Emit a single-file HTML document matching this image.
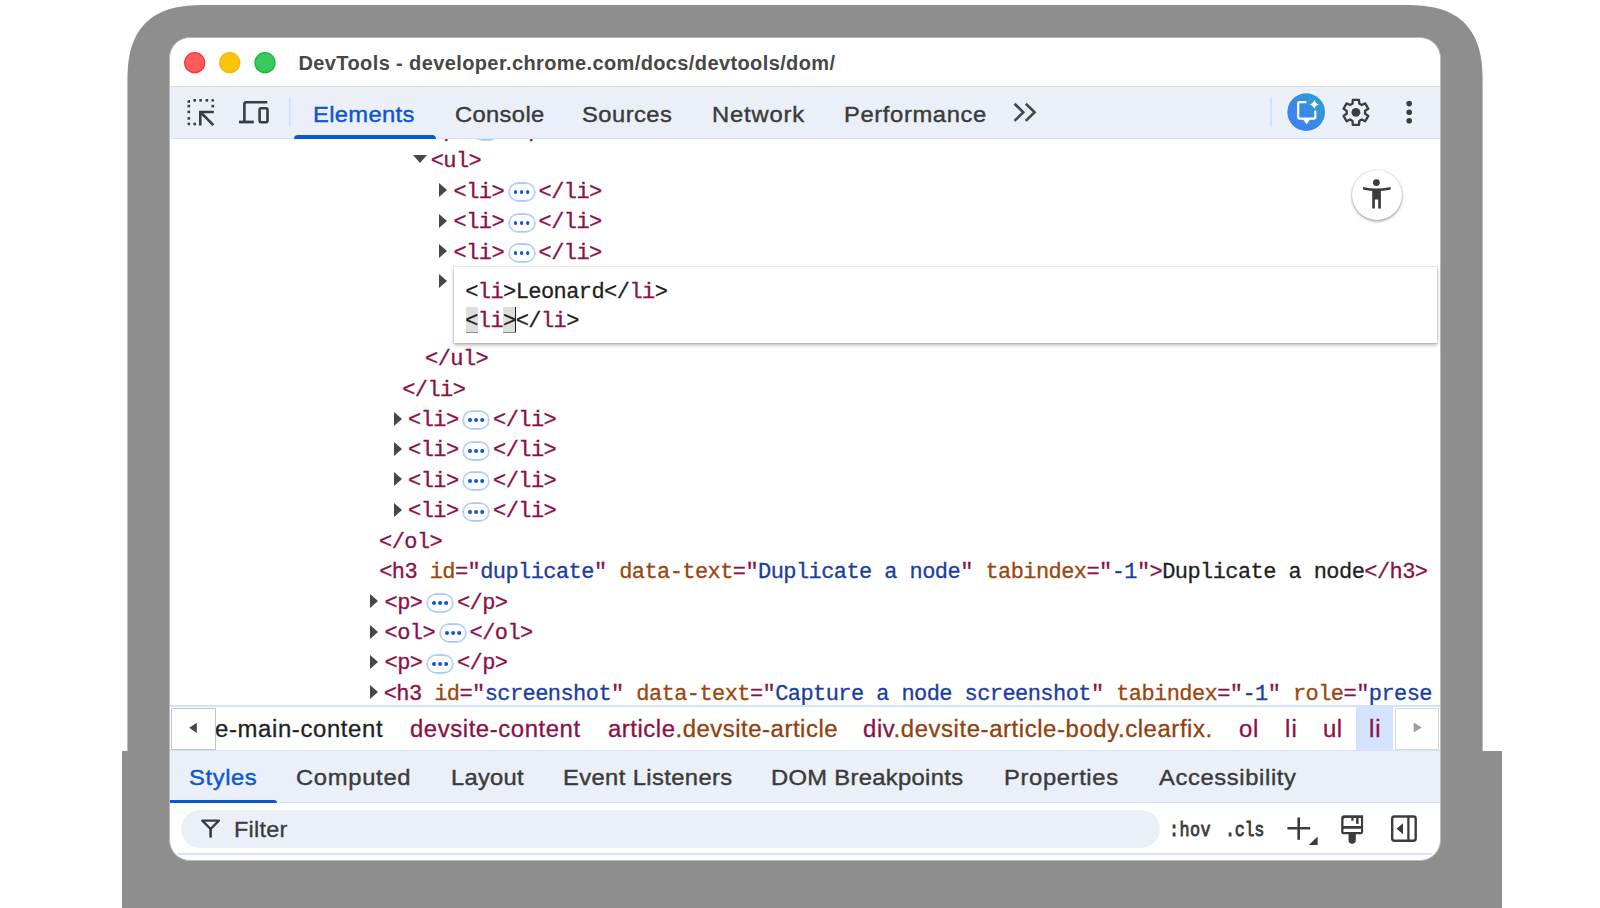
<!DOCTYPE html>
<html><head><meta charset="utf-8">
<style>
*{box-sizing:border-box;margin:0;padding:0}
html,body{width:1600px;height:908px;overflow:hidden;background:#fff;position:relative;font-family:"Liberation Sans",sans-serif}
.abs{position:absolute}
svg{position:absolute;overflow:visible}
#frameTop{left:127px;top:6px;width:1356px;height:760px;background:#8e8e8e;border-radius:68px 68px 0 0}
#frameBot{left:122px;top:751px;width:1380px;height:157px;background:#8e8e8e}
#win{left:169.3px;top:37.3px;width:1271.3px;height:823.7px;background:#fff;border-radius:21px;border:1px solid #b9b9b9;overflow:hidden}
.tl{position:absolute;width:21.2px;height:21.2px;border-radius:50%;top:52.1px;border:1px solid}
.t{position:absolute;white-space:pre;line-height:1}
#title{left:299px;top:53.6px;font-size:20px;font-weight:bold;color:#474747;letter-spacing:0.42px}
#toolbar{left:170px;top:86px;width:1270px;height:52.6px;background:#ebf0f8;border-top:1px solid #dcdcdc;border-bottom:1px solid #d3e3fd}
.tab{font-size:22px;color:#3b3b3b;letter-spacing:1.2px;top:103.2px;-webkit-text-stroke:0.4px currentColor}
.m{position:absolute;white-space:pre;line-height:1;font-family:"Liberation Mono",monospace;font-size:22px;letter-spacing:-0.575px;color:#8b1048;-webkit-text-stroke:0.3px currentColor}
.tag{color:#8b1048}.an{color:#9a4610}.av{color:#1b3d9e}.tx{color:#1f1f1f}
.pill{display:inline-block;position:relative;width:26px;height:18px;border:1px solid #a8c7fa;box-shadow:0 0 0 0.7px #a8c7fa;border-radius:9px;margin:0 4px 0 4.5px;vertical-align:top;top:1.5px}
.pill:before{content:"";position:absolute;left:4.05px;top:6px;width:3.9px;height:3.9px;border-radius:50%;background:#0b57d0;box-shadow:6.1px 0 0 #0b57d0,12.2px 0 0 #0b57d0}
.tr{position:absolute;width:0;height:0;border-top:7px solid transparent;border-bottom:7px solid transparent;border-left:8px solid #474747}
.td{position:absolute;width:0;height:0;border-left:7px solid transparent;border-right:7px solid transparent;border-top:8px solid #474747}
#editor{left:454px;top:267px;width:983px;height:75.5px;background:#fff;box-shadow:0 0 0 1px rgba(0,0,0,0.07),0 2px 4px rgba(0,0,0,0.3)}
#crumbs{left:170px;top:705px;width:1270px;height:45px;background:#fff;border-top:2px solid #d3e3fd}
.cr{font-size:23px;letter-spacing:0.9px;top:717.4px;color:#8b1048}
.cr .cl{color:#9a4610}
#tabs2{left:170px;top:750px;width:1270px;height:53px;background:#ebf0f8;border-top:1px solid #d3e3fd;border-bottom:1px solid #d3e3fd}
.tab2{font-size:22px;color:#3b3b3b;letter-spacing:1.3px;top:766.4px}
#filterbar{left:178px;top:853px;width:1254px;height:2px;background:#d3e3fd}
#filter{left:180.5px;top:809.5px;width:979px;height:38px;border-radius:19px;background:#ebf0f8}
.bl{display:inline-block;width:0;height:0;vertical-align:baseline}
</style></head><body>
<svg width="1600" height="908" style="left:0;top:0"><path fill="#8e8e8e" d="M127.40,760.00 L127.40,85.00 L127.45,77.73 L127.58,72.86 L127.81,68.62 L128.13,64.76 L128.54,61.16 L129.04,57.77 L129.64,54.55 L130.32,51.48 L131.09,48.54 L131.96,45.73 L132.91,43.03 L133.95,40.43 L135.09,37.93 L136.31,35.54 L137.62,33.24 L139.02,31.03 L140.51,28.92 L142.09,26.89 L143.76,24.96 L145.51,23.11 L147.36,21.36 L149.29,19.69 L151.32,18.11 L153.43,16.62 L155.64,15.22 L157.94,13.91 L160.33,12.69 L162.83,11.55 L165.43,10.51 L168.13,9.56 L170.94,8.69 L173.88,7.92 L176.95,7.24 L180.17,6.64 L183.56,6.14 L187.16,5.73 L191.02,5.41 L195.26,5.18 L200.13,5.05 L207.40,5.00 L1402.60,5.00 L1409.87,5.05 L1414.74,5.18 L1418.98,5.41 L1422.84,5.73 L1426.44,6.14 L1429.83,6.64 L1433.05,7.24 L1436.12,7.92 L1439.06,8.69 L1441.87,9.56 L1444.57,10.51 L1447.17,11.55 L1449.67,12.69 L1452.06,13.91 L1454.36,15.22 L1456.57,16.62 L1458.68,18.11 L1460.71,19.69 L1462.64,21.36 L1464.49,23.11 L1466.24,24.96 L1467.91,26.89 L1469.49,28.92 L1470.98,31.03 L1472.38,33.24 L1473.69,35.54 L1474.91,37.93 L1476.05,40.43 L1477.09,43.03 L1478.04,45.73 L1478.91,48.54 L1479.68,51.48 L1480.36,54.55 L1480.96,57.77 L1481.46,61.16 L1481.87,64.76 L1482.19,68.62 L1482.42,72.86 L1482.55,77.73 L1482.60,85.00 L1482.60,760.00Z"/></svg>
<div id="frameBot" class="abs"></div>
<div id="win" class="abs">
</div>

<svg width="1600" height="908" style="left:0;top:0">
<circle cx="194.7" cy="62.7" r="10" fill="#ff5d5d" stroke="#fe2d39" stroke-width="1.3"/>
<circle cx="229.7" cy="62.7" r="10" fill="#f9c50b" stroke="#f5b60e" stroke-width="1.3"/>
<circle cx="265" cy="62.7" r="10" fill="#3bc95b" stroke="#0fba3a" stroke-width="1.3"/>
</svg>
<div id="title" class="t" style="left:298.50px;top:53.31px;font-size:20px;font-weight:bold;color:#474747;letter-spacing:0.388px;">DevTools - developer.chrome.com/docs/devtools/dom/<i class="bl"></i></div>

<!-- DOM tree -->
<div class="m" style="left:430.7px;top:120.3px">&lt;p&gt;<span class="pill"></span>&lt;/p&gt;</div>
<div class="td" style="left:413px;top:155.3px"></div>
<div class="m" style="left:430.7px;top:151.3px">&lt;ul&gt;</div>
<div class="tr" style="left:439px;top:183.4px"></div>
<div class="m" style="left:453.5px;top:181.8px">&lt;li&gt;<span class="pill"></span>&lt;/li&gt;</div>
<div class="tr" style="left:439px;top:213.9px"></div>
<div class="m" style="left:453.5px;top:212.3px">&lt;li&gt;<span class="pill"></span>&lt;/li&gt;</div>
<div class="tr" style="left:439px;top:244.4px"></div>
<div class="m" style="left:453.5px;top:242.8px">&lt;li&gt;<span class="pill"></span>&lt;/li&gt;</div>
<div class="tr" style="left:439px;top:274px"></div>
<div id="editor" class="abs"></div>
<div class="abs" style="left:466.2px;top:307.4px;width:11.8px;height:25.4px;background:#dedede;border-bottom:1.5px solid #8a8a8a"></div>
<div class="abs" style="left:503.4px;top:307.4px;width:12.8px;height:25.4px;background:#dedede;border-bottom:1.5px solid #8a8a8a"></div>
<div class="abs" style="left:515px;top:307.4px;width:1.2px;height:24.5px;background:#1f1f1f"></div>
<div class="m" style="left:465.2px;top:281.7px"><span class="tx">&lt;</span>li<span class="tx">&gt;Leonard&lt;/</span>li<span class="tx">&gt;</span></div>
<div class="m" style="left:465.2px;top:310.6px"><span class="tx">&lt;</span>li<span class="tx">&gt;&lt;/</span>li<span class="tx">&gt;</span></div>
<div class="m" style="left:425.0px;top:349.0px">&lt;/ul&gt;</div>
<div class="m" style="left:402.2px;top:379.5px">&lt;/li&gt;</div>
<div class="tr" style="left:393.5px;top:411.5px"></div>
<div class="m" style="left:408.0px;top:409.9px">&lt;li&gt;<span class="pill"></span>&lt;/li&gt;</div>
<div class="tr" style="left:393.5px;top:441.9px"></div>
<div class="m" style="left:408.0px;top:440.3px">&lt;li&gt;<span class="pill"></span>&lt;/li&gt;</div>
<div class="tr" style="left:393.5px;top:472.4px"></div>
<div class="m" style="left:408.0px;top:470.8px">&lt;li&gt;<span class="pill"></span>&lt;/li&gt;</div>
<div class="tr" style="left:393.5px;top:502.8px"></div>
<div class="m" style="left:408.0px;top:501.2px">&lt;li&gt;<span class="pill"></span>&lt;/li&gt;</div>
<div class="m" style="left:379.1px;top:531.6px">&lt;/ol&gt;</div>
<div class="m" style="left:379.2px;top:562.1px">&lt;h3 <span class="an">id</span>="<span class="av">duplicate</span>" <span class="an">data-text</span>="<span class="av">Duplicate a node</span>" <span class="an">tabindex</span>="<span class="av">-1</span>"&gt;<span class="tx">Duplicate a node</span>&lt;/h3&gt;</div>
<div class="tr" style="left:370.2px;top:594.1px"></div>
<div class="m" style="left:384.6px;top:592.5px">&lt;p&gt;<span class="pill"></span>&lt;/p&gt;</div>
<div class="tr" style="left:370.2px;top:624.5px"></div>
<div class="m" style="left:384.6px;top:622.9px">&lt;ol&gt;<span class="pill"></span>&lt;/ol&gt;</div>
<div class="tr" style="left:370.2px;top:654.9px"></div>
<div class="m" style="left:384.6px;top:653.3px">&lt;p&gt;<span class="pill"></span>&lt;/p&gt;</div>
<div class="tr" style="left:370.2px;top:685.4px"></div>
<div class="m" style="left:383.7px;top:683.8px">&lt;h3 <span class="an">id</span>="<span class="av">screenshot</span>" <span class="an">data-text</span>="<span class="av">Capture a node screenshot</span>" <span class="an">tabindex</span>="<span class="av">-1</span>" <span class="an">role</span>="<span class="av">prese</span></div>

<!-- toolbar -->
<div id="toolbar" class="abs"></div>
<div id="tab_el" class="t" style="transform:scaleX(1.08);transform-origin:0 0;left:312.50px;top:103.81px;font-size:22px;font-weight:normal;color:#0b57d0;letter-spacing:0.300px;-webkit-text-stroke:0.4px currentColor;">Elements<i class="bl"></i></div>
<div id="tab_co" class="t" style="transform:scaleX(1.08);transform-origin:0 0;left:454.50px;top:103.81px;font-size:22px;font-weight:normal;color:#3b3b3b;letter-spacing:0.317px;-webkit-text-stroke:0.4px currentColor;">Console<i class="bl"></i></div>
<div id="tab_so" class="t" style="transform:scaleX(1.08);transform-origin:0 0;left:581.50px;top:103.81px;font-size:22px;font-weight:normal;color:#3b3b3b;letter-spacing:0.417px;-webkit-text-stroke:0.4px currentColor;">Sources<i class="bl"></i></div>
<div id="tab_ne" class="t" style="transform:scaleX(1.08);transform-origin:0 0;left:711.50px;top:103.81px;font-size:22px;font-weight:normal;color:#3b3b3b;letter-spacing:0.775px;-webkit-text-stroke:0.4px currentColor;">Network<i class="bl"></i></div>
<div id="tab_pe" class="t" style="transform:scaleX(1.08);transform-origin:0 0;left:843.50px;top:103.81px;font-size:22px;font-weight:normal;color:#3b3b3b;letter-spacing:0.575px;-webkit-text-stroke:0.4px currentColor;">Performance<i class="bl"></i></div>
<div class="abs" style="left:293.8px;top:134.6px;width:142px;height:4px;background:#0b57d0;border-radius:4px 4px 0 0"></div>
<div class="abs" style="left:288.8px;top:97.1px;width:1.8px;height:30.3px;background:#d3e3fd"></div>
<div class="abs" style="left:1270.2px;top:96.8px;width:1.8px;height:30.3px;background:#d3e3fd"></div>

<!-- accessibility -->
<div class="abs" style="left:1352px;top:169.5px;width:50px;height:50px;border-radius:50%;background:#fff;box-shadow:0 1.5px 3px rgba(0,0,0,0.35),0 0 1.5px rgba(0,0,0,0.25)"></div>

<!-- breadcrumbs -->
<div id="crumbs" class="abs"></div>
<div class="abs" style="left:1355.6px;top:707px;width:37px;height:43px;background:#d3e3fd"></div>
<div id="cr1" class="t" style="transform:scaleX(1.04);transform-origin:0 0;left:214.50px;top:718.20px;font-size:23px;font-weight:normal;color:#1f1f1f;letter-spacing:0.596px;-webkit-text-stroke:0.3px currentColor;">e-main-content<i class="bl"></i></div>
<div id="cr2" class="t" style="transform:scaleX(1.04);transform-origin:0 0;left:409.50px;top:718.20px;font-size:23px;font-weight:normal;color:#8b1048;letter-spacing:0.543px;-webkit-text-stroke:0.3px currentColor;">devsite-content<i class="bl"></i></div>
<div id="cr3" class="t" style="transform:scaleX(1.04);transform-origin:0 0;left:607.50px;top:718.20px;font-size:23px;font-weight:normal;color:#8b1048;letter-spacing:0.505px;-webkit-text-stroke:0.3px currentColor;">article<span style="color:#93410c">.devsite-article</span><i class="bl"></i></div>
<div id="cr4" class="t" style="transform:scaleX(1.04);transform-origin:0 0;left:862.50px;top:718.20px;font-size:23px;font-weight:normal;color:#8b1048;letter-spacing:0.555px;-webkit-text-stroke:0.3px currentColor;">div<span style="color:#93410c">.devsite-article-body.clearfix.</span><i class="bl"></i></div>
<div id="cr5" class="t" style="transform:scaleX(1.04);transform-origin:0 0;left:1238.50px;top:718.20px;font-size:23px;font-weight:normal;color:#8b1048;letter-spacing:0.700px;-webkit-text-stroke:0.3px currentColor;">ol<i class="bl"></i></div>
<div id="cr6" class="t" style="transform:scaleX(1.04);transform-origin:0 0;left:1284.50px;top:718.20px;font-size:23px;font-weight:normal;color:#8b1048;letter-spacing:1.100px;-webkit-text-stroke:0.3px currentColor;">li<i class="bl"></i></div>
<div id="cr7" class="t" style="transform:scaleX(1.04);transform-origin:0 0;left:1322.50px;top:718.20px;font-size:23px;font-weight:normal;color:#8b1048;letter-spacing:0.350px;-webkit-text-stroke:0.3px currentColor;">ul<i class="bl"></i></div>
<div id="cr8" class="t" style="transform:scaleX(1.04);transform-origin:0 0;left:1368.50px;top:718.20px;font-size:23px;font-weight:normal;color:#8b1048;letter-spacing:0.800px;-webkit-text-stroke:0.3px currentColor;">li<i class="bl"></i></div>
<div class="abs" style="left:171px;top:708px;width:44.5px;height:41.5px;border:1px solid #c4c4c4;background:#fff"></div>
<div class="abs" style="left:1394.6px;top:708px;width:44.5px;height:41.6px;border:1px solid #d8d8d8;background:#fff"></div>

<!-- bottom tabs -->
<div id="tabs2" class="abs"></div>
<div id="bt1" class="t" style="transform:scaleX(1.08);transform-origin:0 0;left:188.50px;top:766.81px;font-size:22px;font-weight:normal;color:#0b57d0;letter-spacing:0.560px;-webkit-text-stroke:0.4px currentColor;">Styles<i class="bl"></i></div>
<div id="bt2" class="t" style="transform:scaleX(1.08);transform-origin:0 0;left:295.50px;top:766.81px;font-size:22px;font-weight:normal;color:#3b3b3b;letter-spacing:0.650px;-webkit-text-stroke:0.4px currentColor;">Computed<i class="bl"></i></div>
<div id="bt3" class="t" style="transform:scaleX(1.08);transform-origin:0 0;left:450.50px;top:766.81px;font-size:22px;font-weight:normal;color:#3b3b3b;letter-spacing:0.230px;-webkit-text-stroke:0.4px currentColor;">Layout<i class="bl"></i></div>
<div id="bt4" class="t" style="transform:scaleX(1.08);transform-origin:0 0;left:562.50px;top:766.81px;font-size:22px;font-weight:normal;color:#3b3b3b;letter-spacing:0.361px;-webkit-text-stroke:0.4px currentColor;">Event Listeners<i class="bl"></i></div>
<div id="bt5" class="t" style="transform:scaleX(1.08);transform-origin:0 0;left:770.50px;top:766.81px;font-size:22px;font-weight:normal;color:#3b3b3b;letter-spacing:0.300px;-webkit-text-stroke:0.4px currentColor;">DOM Breakpoints<i class="bl"></i></div>
<div id="bt6" class="t" style="transform:scaleX(1.08);transform-origin:0 0;left:1003.50px;top:766.81px;font-size:22px;font-weight:normal;color:#3b3b3b;letter-spacing:0.589px;-webkit-text-stroke:0.4px currentColor;">Properties<i class="bl"></i></div>
<div id="bt7" class="t" style="transform:scaleX(1.08);transform-origin:0 0;left:1158.50px;top:766.81px;font-size:22px;font-weight:normal;color:#3b3b3b;letter-spacing:0.583px;-webkit-text-stroke:0.4px currentColor;">Accessibility<i class="bl"></i></div>
<div class="abs" style="left:170px;top:799.5px;width:107px;height:3.5px;background:#0b57d0;border-radius:0 3px 0 0"></div>

<div id="filterbar" class="abs"></div>
<div id="filter" class="abs"></div>
<div id="filt" class="t" style="transform:scaleX(1.04);transform-origin:0 0;left:233.50px;top:819.00px;font-size:22.5px;font-weight:normal;color:#3b3b3b;letter-spacing:0.260px;-webkit-text-stroke:0.3px currentColor;">Filter<i class="bl"></i></div>
<div id="hov" class="t" style="font-family:Liberation Mono,monospace;transform:scaleX(0.8);transform-origin:0 0;left:1168.50px;top:819.61px;font-size:21px;font-weight:normal;color:#3b3b3b;letter-spacing:0.550px;-webkit-text-stroke:0.85px currentColor;">:hov<i class="bl"></i></div>
<div id="cls" class="t" style="font-family:Liberation Mono,monospace;transform:scaleX(0.8);transform-origin:0 0;left:1224.50px;top:819.61px;font-size:21px;font-weight:normal;color:#3b3b3b;letter-spacing:-0.400px;-webkit-text-stroke:0.85px currentColor;">.cls<i class="bl"></i></div>

<svg width="1600" height="908" style="left:0;top:0" viewBox="0 0 1600 908">
<g fill="#3c3c3c">
<!-- inspect dotted square -->
<path d="M187.5,101.6 a1.5,1.5 0 0 1 1.5,-1.5 h1 v2.6 h-2.5z"/>
<rect x="193.4" y="99" width="2.6" height="2.6"/><rect x="199.3" y="99" width="2.6" height="2.6"/><rect x="205.6" y="99" width="2.6" height="2.6"/>
<path d="M211.5,99 h1 a1.5,1.5 0 0 1 1.6,1.6 v1 h-2.6z"/>
<rect x="211.5" y="104.8" width="2.6" height="2.6"/>
<rect x="187.5" y="104.8" width="2.6" height="2.6"/><rect x="187.5" y="110.6" width="2.6" height="2.6"/><rect x="187.5" y="117.1" width="2.6" height="2.6"/>
<path d="M187.5,122.7 h2.6 v2.6 h-1 a1.6,1.6 0 0 1 -1.6,-1.6z"/>
<rect x="193.4" y="122.7" width="2.6" height="2.6"/>
</g>
<g stroke="#3c3c3c" stroke-width="2.6" fill="none">
<path d="M213.8,112 H200.3 V125.6"/>
<path d="M200.8,112.5 L213.4,125.1"/>
<!-- device -->
<path d="M244.4,121 V104 a1.8,1.8 0 0 1 1.8,-1.8 H267.3"/>
<rect x="259.6" y="108.2" width="7.9" height="14" rx="1.6"/>
</g>
<rect x="239" y="120.6" width="14.8" height="2.8" fill="#3c3c3c"/>
<!-- chevrons -->
<path d="M1014.5,103.7 L1023.3,112.3 L1014.5,120.9 M1025.8,103.7 L1034.6,112.3 L1025.8,120.9" stroke="#474747" stroke-width="2.6" fill="none"/>
<!-- AI button -->
<defs><linearGradient id="aig" x1="0" y1="1" x2="1" y2="0"><stop offset="0" stop-color="#3f7ff8"/><stop offset="0.5" stop-color="#3a8ae6"/><stop offset="1" stop-color="#28a8c4"/></linearGradient></defs>
<circle cx="1306.2" cy="112.1" r="19.6" fill="#fafcff"/><circle cx="1306.2" cy="112.1" r="18.9" fill="url(#aig)"/>
<path d="M1306.4,102.2 H1299.2 a1,1 0 0 0 -1,1 V117.6 a1,1 0 0 0 1,1 H1314.3 a1,1 0 0 0 1,-1 V110.6" stroke="#fff" stroke-width="2.2" fill="none"/>
<path d="M1302.4,118.4 L1306.6,124.2 L1310.9,118.4z" fill="#fff"/>
<path d="M1314.3,99.8 Q1315.2,103.6 1318.9,104.5 Q1315.2,105.4 1314.3,109.2 Q1313.4,105.4 1309.7,104.5 Q1313.4,103.6 1314.3,99.8z" fill="#fff"/>
<!-- gear -->
<path d="M1352.57,103.62 L1352.78,99.78 L1359.02,99.78 L1359.23,103.62 L1361.75,105.07 L1365.18,103.34 L1368.30,108.74 L1365.09,110.85 L1365.09,113.75 L1368.30,115.86 L1365.18,121.26 L1361.75,119.53 L1359.23,120.98 L1359.02,124.82 L1352.78,124.82 L1352.57,120.98 L1350.05,119.53 L1346.62,121.26 L1343.50,115.86 L1346.71,113.75 L1346.71,110.85 L1343.50,108.74 L1346.62,103.34 L1350.05,105.07Z" stroke="#3c3c3c" stroke-width="2.3" fill="none" stroke-linejoin="round"/>
<circle cx="1355.9" cy="112.3" r="4.4" fill="#3c3c3c"/>
<!-- kebab -->
<circle cx="1409.2" cy="103.6" r="2.8" fill="#3c3c3c"/><circle cx="1409.2" cy="112.3" r="2.8" fill="#3c3c3c"/><circle cx="1409.2" cy="120.8" r="2.8" fill="#3c3c3c"/>
<!-- accessibility person -->
<circle cx="1376.4" cy="182.6" r="3.4" fill="#3c3c3c"/>
<path d="M1364,188.4 Q1376.4,191.2 1389.6,188.4" stroke="#3c3c3c" stroke-width="2.6" fill="none" stroke-linecap="round"/>
<path d="M1372.2,189.5 H1380.9 V208.6 H1378.2 V199.5 H1374.9 V208.6 H1372.2z" fill="#3c3c3c"/>
<!-- breadcrumb arrows -->
<path d="M189.2,727.8 L196.8,722.7 V733z" fill="#474747"/>
<path d="M1421.7,727.4 L1413.7,722.5 V732.4z" fill="#9e9e9e"/>
<!-- filter funnel -->
<path d="M202.3,820.6 H218.9 L210.6,829 Z" stroke="#3c3c3c" stroke-width="2.3" fill="none" stroke-linejoin="round"/>
<path d="M210.6,828.6 V836.4" stroke="#3c3c3c" stroke-width="2.6" stroke-linecap="round"/>
<!-- plus -->
<path d="M1287.4,828.3 H1310.2 M1298.7,817.6 V839.7" stroke="#3c3c3c" stroke-width="2.6"/>
<path d="M1308.8,845 L1317.6,836.4 V845z" fill="#3c3c3c"/>
<!-- paint brush -->
<path fill-rule="evenodd" fill="#3c3c3c" d="M1344.3,815.3 H1363.1 V832 a2.2,2.2 0 0 1 -2.2,2.2 H1343.4 a2.2,2.2 0 0 1 -2.2,-2.2 V818.4 a3.1,3.1 0 0 1 3.1,-3.1z M1345,817.9 H1361 V826 H1343.5 V819.4 a1.5,1.5 0 0 1 1.5,-1.5z M1343.5,828.8 H1361 V831.9 H1343.5z"/>
<rect x="1351.3" y="817.5" width="2.3" height="3.2" fill="#3c3c3c"/><rect x="1356.1" y="817.5" width="2.5" height="6.3" fill="#3c3c3c"/>
<path d="M1348.5,834 H1355.8 V840.1 a3.65,3.65 0 0 1 -7.3,0z" fill="#3c3c3c"/>
<!-- sidebar toggle -->
<rect x="1392.2" y="816.5" width="23.5" height="24.2" rx="2.2" stroke="#3c3c3c" stroke-width="2.4" fill="none"/>
<path d="M1408.4,816 V841" stroke="#3c3c3c" stroke-width="2.3"/>
<path d="M1396.6,828.7 L1403,823.2 V834.2z" fill="#3c3c3c"/>
</svg>
</body></html>
